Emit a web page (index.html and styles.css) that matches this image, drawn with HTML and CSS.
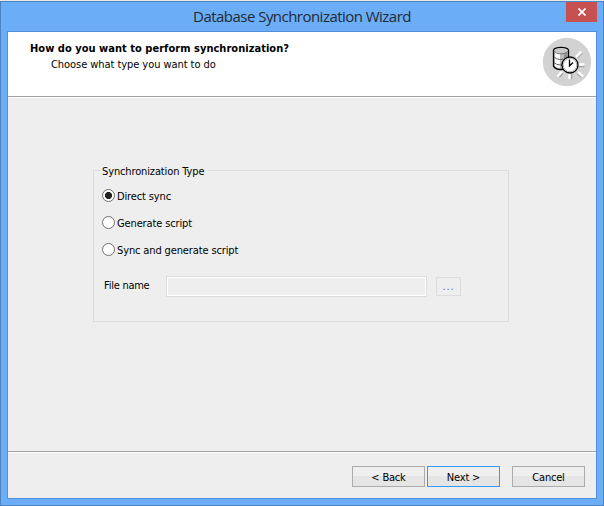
FILE: index.html
```html
<!DOCTYPE html>
<html lang="en">
<head>
<meta charset="utf-8">
<title>Database Synchronization Wizard</title>
<link rel="stylesheet" href="styles.css">
</head>
<body>
<div class="window">
  <div class="titlebar">
    <h1 class="title"><span>Database Synchronization Wizard</span></h1>
    <button class="close" aria-label="Close"><svg width="8" height="8" viewBox="0 0 8 8"><path d="M.5 .5L7.5 7.5M7.5 .5L.5 7.5" stroke="#fff" stroke-width="1.7"/></svg></button>
  </div>
  <div class="client">
    <header class="banner">
      <div class="heading">
        <h2>How do you want to perform synchronization?</h2>
        <p>Choose what type you want to do</p>
      </div>
      <svg class="logo" width="50" height="50" viewBox="0 0 50 50">
        <circle cx="25" cy="25" r="24.200" fill="#d2d2d2"/>
        <path d="M35 20.500L40 15.500M37 29H42.500M35.500 36L40 40M29 37V42M20.500 36L17 40" stroke="#a4a4a4" stroke-width="2.500"/>
        <path d="M34 20L39.500 14.500M36.500 27.500H42.500M36 35L41 39.500M27.500 37V42M20 34.500L15.500 39.500" stroke="#fff" stroke-width="2.500"/>
        <path d="M11.500 13V29Q13 32.500 19 32.500Q25.500 32.500 26.500 29V13Q25 10.500 19 10.500Q13 10.500 11.500 13Z" fill="#bdbdbd" stroke="#000" stroke-width="1.300"/>
        <path d="M13 15V29Q15 31 18 31V16Z" fill="#fff"/>
        <path d="M22 16V31L25.500 29V14Z" fill="#929292"/>
        <ellipse cx="19" cy="13.500" rx="6.800" ry="2.500" fill="#c9c9c9"/>
        <path d="M12 14Q14 17 19 17Q24 17 26 14" fill="none" stroke="#777"/>
        <path d="M12 20Q14 22.500 19 22.500Q24 22.500 26 20M12 25.500Q14 28 19 28Q24 28 26 25.500" fill="none" stroke="#666"/>
        <circle cx="28" cy="28" r="8" fill="#fff" stroke="#000" stroke-width="1.300"/>
        <circle cx="28" cy="28" r="6.700" fill="none" stroke="#b5b5b5"/>
        <path d="M27.500 22.500V29L31 25.500" fill="none" stroke="#000" stroke-width="1.300"/>
      </svg>
    </header>
    <main class="content">
      <section class="group">
        <div class="legend">Synchronization Type</div>
        <label class="option"><i class="radio on"></i><span>Direct sync</span></label>
        <label class="option"><i class="radio"></i><span>Generate script</span></label>
        <label class="option"><i class="radio"></i><span>Sync and generate script</span></label>
        <div class="file-row">
          <div class="file-label">File name</div>
          <input class="file-input" disabled aria-label="File name">
          <button class="browse" disabled>...</button>
        </div>
      </section>
    </main>
    <footer class="footer">
      <button class="btn">&lt; Back</button>
      <button class="btn primary">Next &gt;</button>
      <button class="btn cancel">Cancel</button>
    </footer>
  </div>
</div>
</body>
</html>
```
FILE: styles.css
```css
* { box-sizing: border-box; }
body {
  margin: 0;
  padding-top: 1px;
  width: 604px;
  height: 506px;
  overflow: hidden;
  background: #e8e8e8;
  color: #000;
  font: 11px/14px "DejaVu Sans Condensed", "DejaVu Sans", sans-serif;
  letter-spacing: -0.13px;
}
h1, h2, p { margin: 0; }
button { font: inherit; color: inherit; letter-spacing: inherit; padding: 0; border-radius: 0; }
.window {
  height: 505px;
  border: 1px solid #4c84c2;
  background: #6badf6;
  padding: 0 6px 6px;
}
.titlebar { position: relative; height: 29px; }
.title {
  text-align: center;
  font: 15px/29px "Open Sans", "Noto Sans", sans-serif;
  letter-spacing: -0.53px;
  color: #222a34;
}
.close {
  position: absolute;
  top: 0;
  right: 0;
  width: 31px;
  height: 20px;
  border: 0;
  background: #c75050;
  display: flex;
  align-items: center;
  justify-content: center;
}
.client {
  height: 468px;
  border: 1px solid #5190d8;
  background: #eee;
  display: flex;
  flex-direction: column;
}
.banner {
  height: 66px;
  flex: none;
  background: #fff;
  border-bottom: 1px solid #fff;
  box-shadow: inset 0 -1px #a0a0a0;
  display: flex;
  justify-content: space-between;
  padding: 5px 4px 0 22px;
}
.heading { padding-top: 4px; }
h2 { font-size: 11px; line-height: 16px; font-weight: bold; letter-spacing: 0.03px; white-space: nowrap; }
.heading p { padding-left: 21px; line-height: 15px; letter-spacing: -0.06px; }
.content { flex: 1; padding: 72px 0 0 85px; }
.group {
  width: 416px;
  height: 152px;
  border: 1px solid #dcdcdc;
  padding-left: 8px;
}
.legend {
  width: 108px;
  height: 14px;
  margin: -7px 0 4px -2px;
  padding-left: 2px;
  line-height: 16px;
  background: #eee;
  white-space: nowrap;
}
.option { display: flex; align-items: center; height: 27px; gap: 2px; }
.option span { padding-top: 2px; }
.radio {
  width: 13px;
  height: 13px;
  border: 1px solid #707070;
  border-radius: 50%;
  background: #fff;
}
.radio.on { background: radial-gradient(circle, #222 0 3.2px, #fff 3.9px); }
.file-row { display: flex; align-items: center; height: 21px; margin-top: 13px; }
.file-label { width: 64px; padding: 0 0 2px 2px; letter-spacing: -0.25px; }
.file-input {
  width: 261px;
  height: 21px;
  padding: 0;
  border: 1px solid #dcdcdc;
  box-shadow: inset 0 0 0 1px #fff;
  background: #eee;
}
.browse {
  width: 25px;
  height: 19px;
  margin-left: 9px;
  border: 1px solid #dcdcdc;
  background: #eee;
  color: #707070;
  letter-spacing: 0.8px;
}
.footer {
  height: 47px;
  flex: none;
  border-top: 1px solid #a0a0a0;
  box-shadow: inset 0 1px #fff;
  display: flex;
  justify-content: flex-end;
  gap: 2px;
  padding: 14px 11px 0 0;
}
.btn {
  width: 73px;
  height: 21px;
  padding-top: 2px;
  line-height: 17px;
  letter-spacing: -0.2px;
  border: 1px solid #acacac;
  background: linear-gradient(#efefef 0 45%, #e5e5e5 50% 100%);
}
.primary { border-color: #3399ff; }
.cancel { margin-left: 10px; }
```
